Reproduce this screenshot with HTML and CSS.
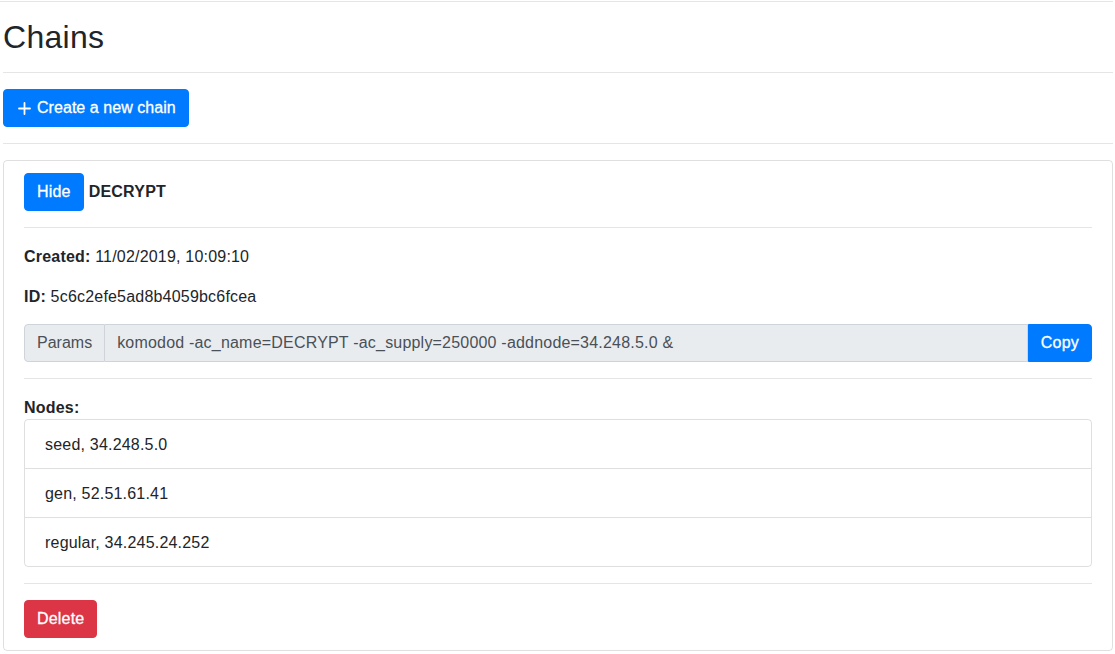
FILE: index.html
```html
<!DOCTYPE html>
<html>
<head>
<meta charset="utf-8">
<link rel="stylesheet" href="styles.css">
</head>
<body>
<hr class="rule top-rule">
<div class="page">
  <h2 class="title">Chains</h2>
  <hr class="rule">
  <button class="btn btn-primary create"><svg class="plus" width="13" height="13" viewBox="0 0 13 13"><path d="M6.5 1v11M1 6.5h11" stroke="#fff" stroke-width="1.8" stroke-linecap="round"/></svg>Create a new chain</button>
  <hr class="rule">
  <div class="card">
    <div class="card-body">
      <div class="card-head"><button class="btn btn-primary">Hide</button> <strong>DECRYPT</strong></div>
      <hr class="rule">
      <p class="line"><strong>Created:</strong> 11/02/2019, 10:09:10</p>
      <p class="line"><strong>ID:</strong> 5c6c2efe5ad8b4059bc6fcea</p>
      <div class="input-group">
        <span class="addon">Params</span>
        <div class="field">komodod -ac_name=DECRYPT -ac_supply=250000 -addnode=34.248.5.0 &amp;</div>
        <button class="btn btn-primary copy">Copy</button>
      </div>
      <hr class="rule">
      <div class="nodes-label"><strong>Nodes:</strong></div>
      <ul class="list-group">
        <li class="list-item">seed, 34.248.5.0</li>
        <li class="list-item">gen, 52.51.61.41</li>
        <li class="list-item">regular, 34.245.24.252</li>
      </ul>
      <hr class="rule">
      <button class="btn btn-danger">Delete</button>
    </div>
  </div>
</div>
</body>
</html>
```
FILE: styles.css
```css
* { box-sizing: border-box; }
html, body { margin: 0; padding: 0; }
body {
  font-family: "Liberation Sans", Arial, sans-serif;
  font-size: 16px;
  line-height: 24px;
  letter-spacing: 0.2px;
  color: #212529;
  background: #fff;
}
.rule {
  border: 0;
  border-top: 1px solid rgba(0,0,0,0.1);
  margin: 16px 0;
  height: 0;
}
.top-rule { margin: 1px 2px 0 0; }
.page { padding: 0 2px 0 3px; }
.title {
  font-size: 32px;
  font-weight: 500;
  line-height: 38.4px;
  margin: 16px 0 8px 0;
  letter-spacing: 0.3px;
}
.btn {
  display: inline-flex;
  align-items: center;
  font-family: inherit;
  font-size: 16px;
  line-height: 24px;
  letter-spacing: 0.2px;
  padding: 6px 12px;
  border: 1px solid transparent;
  border-radius: 4px;
  color: #fff;
  cursor: pointer;
  vertical-align: middle;
  -webkit-text-stroke: 0.3px #fff;
}
.btn-primary { background: #007bff; border-color: #007bff; }
.btn-danger { background: #dc3545; border-color: #dc3545; }
.create { padding-left: 14px; padding-right: 12px; letter-spacing: 0.05px; }
.plus { margin-right: 6px; }
.card {
  border: 1px solid rgba(0,0,0,0.125);
  border-radius: 4px;
}
.card-body { padding: 12px 20px 12px 20px; }
.card-head { display: flex; align-items: center; gap: 5px; }
.card-head strong { font-weight: 700; }
.line { margin: 0 0 16px 0; padding-top: 1px; height: 24px; }
.input-group {
  display: flex;
  height: 38px;
}
.addon {
  display: flex;
  align-items: center;
  padding: 6px 12px;
  background: #e9ecef;
  border: 1px solid #ced4da;
  border-radius: 4px 0 0 4px;
  color: #495057;
  letter-spacing: 0;
}
.field {
  flex: 1;
  display: flex;
  align-items: center;
  padding: 6px 12px;
  background: #e9ecef;
  border: 1px solid #ced4da;
  border-left: 0;
  color: #495057;
  white-space: nowrap;
}
.copy { border-radius: 0 4px 4px 0; }
.nodes-label { line-height: 24px; padding-top: 1px; height: 24px; }
.list-group {
  list-style: none;
  margin: 0;
  padding: 0;
  border: 1px solid rgba(0,0,0,0.125);
  border-radius: 4px;
}
.list-item {
  padding: 13px 20px 11px 20px;
  border-top: 1px solid rgba(0,0,0,0.125);
}
.list-item:first-child { border-top: 0; }
```
